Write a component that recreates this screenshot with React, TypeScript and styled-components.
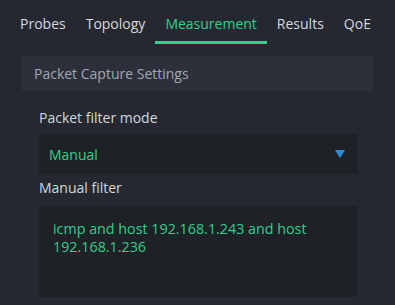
import * as React from 'react';
import styled, { createGlobalStyle } from 'styled-components';

const GlobalStyle = createGlobalStyle`
  html, body {
    margin: 0;
    padding: 0;
    background: #252830;
  }
  body {
    font-family: 'Open Sans', 'DejaVu Sans', sans-serif;
    font-size: 14px;
  }
`;

const Page = styled.div`
  width: 395px;
  height: 305px;
  overflow: hidden;
  background: #252830;
`;

const TabBar = styled.nav`
  display: flex;
  padding: 0 0 0 10px;
  height: 44px;
  margin-bottom: 12px;
`;

const Tab = styled.div<{ $active?: boolean }>`
  padding: 6px 10px 0 10px;
  height: 44px;
  box-sizing: border-box;
  display: flex;
  align-items: center;
  color: ${(p) => (p.$active ? '#2ed08c' : '#d4d8de')};
  border-bottom: 3px solid ${(p) => (p.$active ? '#2ed08c' : 'transparent')};
  font-size: 14px;
`;

const Panel = styled.section`
  margin: 0 21px 0 22px;
`;

const PanelHeader = styled.div`
  height: 35px;
  background: #2c303b;
  color: #a2a7b0;
  display: flex;
  align-items: center;
  padding-left: 12px;
`;

const Body = styled.div`
  padding: 17px 17px 0 17px;
  display: flex;
  flex-direction: column;
`;

const Label = styled.div<{ $gap: number }>`
  color: #d4d8de;
  line-height: 20px;
  margin-bottom: ${(p) => p.$gap}px;
`;

const Select = styled.div`
  height: 40px;
  background: #1e2125;
  display: flex;
  align-items: center;
  justify-content: space-between;
  padding: 0 12px 0 10px;
  color: #2ed08c;
  margin-bottom: 4px;
`;

const Arrow = styled.svg`
  width: 10px;
  height: 8px;
`;

const TextArea = styled.div`
  height: 91px;
  background: #1e2125;
  color: #2ed08c;
  padding: 14px 14px;
  box-sizing: border-box;
  line-height: 18px;
  font-size: 14.3px;
`;

export default function App() {
  const tabs = ['Probes', 'Topology', 'Measurement', 'Results', 'QoE'];
  return (
    <Page>
      <GlobalStyle />
      <TabBar>
        {tabs.map((t) => (
          <Tab key={t} $active={t === 'Measurement'}>{t}</Tab>
        ))}
      </TabBar>
      <Panel>
        <PanelHeader>Packet Capture Settings</PanelHeader>
        <Body>
          <Label $gap={6}>Packet filter mode</Label>
          <Select>
            Manual
            <Arrow viewBox="0 0 10 8">
              <polygon points="0,0 10,0 5,8" fill="#2a8ee0" />
            </Arrow>
          </Select>
          <Label $gap={8}>Manual filter</Label>
          <TextArea>icmp and host 192.168.1.243 and host 192.168.1.236</TextArea>
        </Body>
      </Panel>
    </Page>
  );
}
